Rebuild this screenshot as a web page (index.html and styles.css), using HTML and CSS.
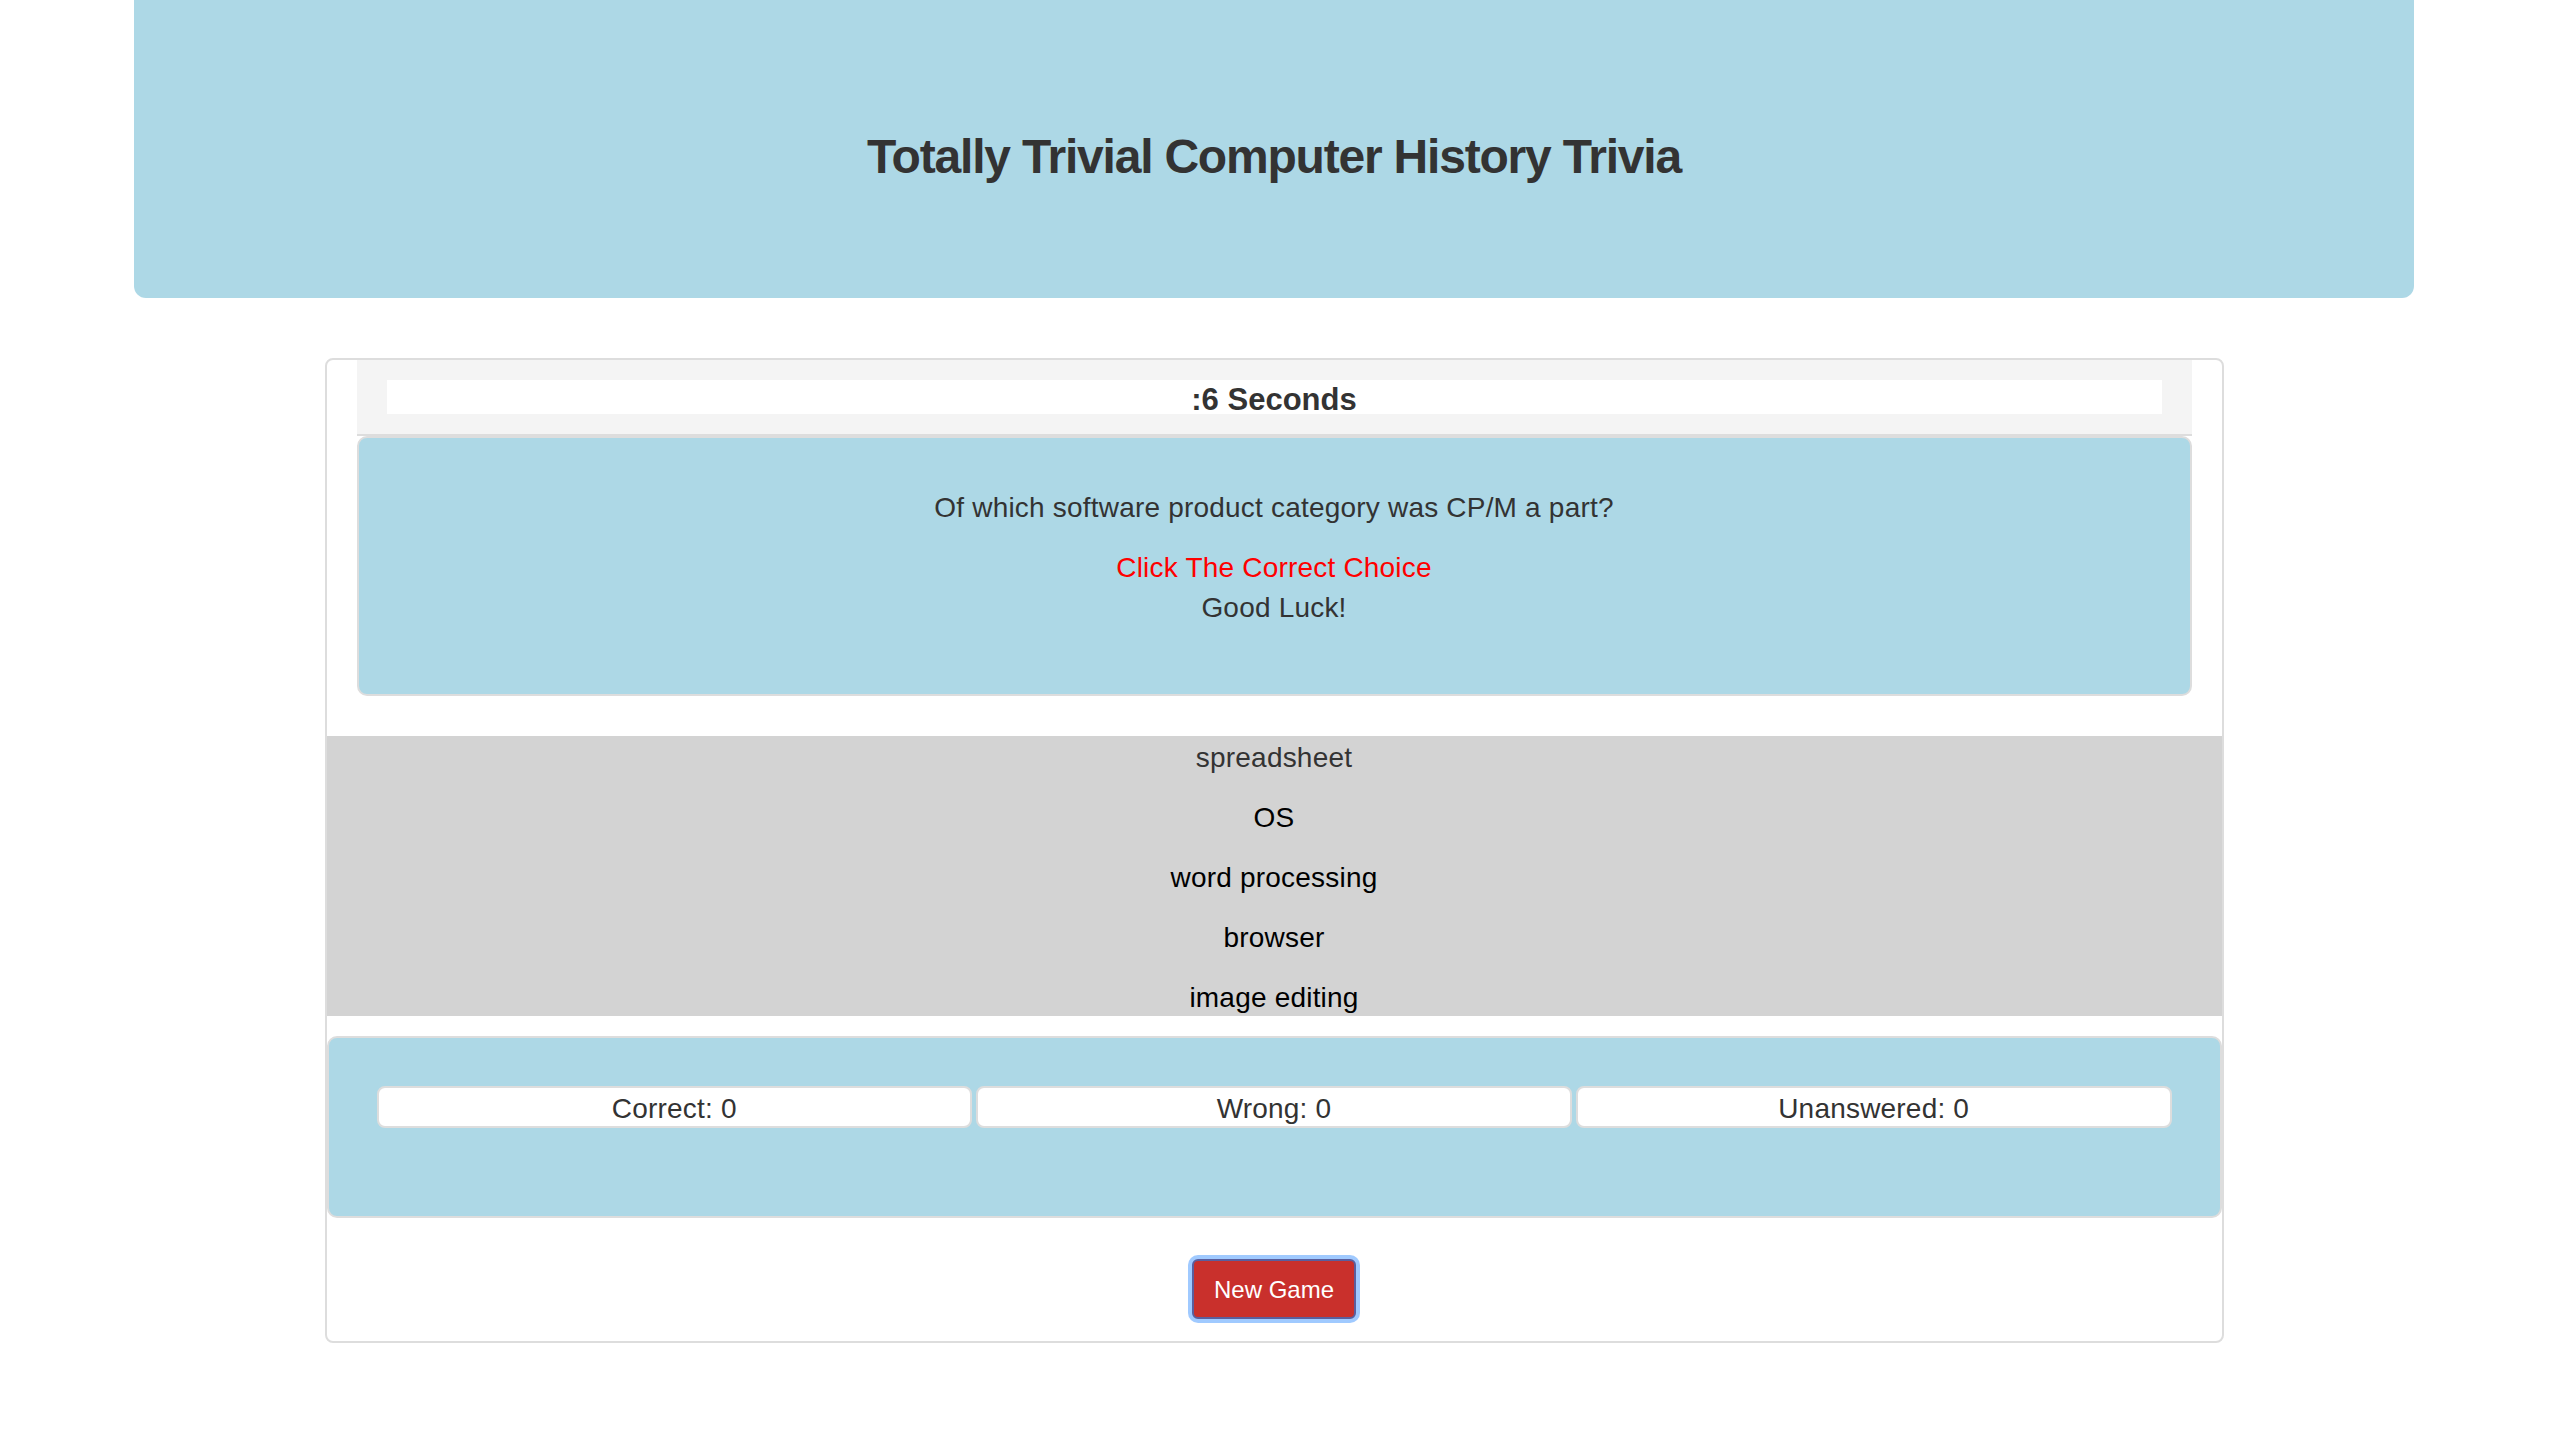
FILE: index.html
```html
<!DOCTYPE html>
<html lang="en">
<head>
<meta charset="utf-8">
<title>Totally Trivial Computer History Trivia</title>
<link rel="stylesheet" href="styles.css">
</head>
<body>
<div class="container">
  <header class="jumbotron">
    <h1 class="title">Totally Trivial Computer History Trivia</h1>
  </header>

  <main class="panel">
    <div class="timer-heading">
      <div class="timer-bar">:6 Seconds</div>
    </div>

    <section class="question-well">
      <p class="question">Of which software product category was CP/M a part?</p>
      <div class="instructions">
        <div class="instruct-red">Click The Correct Choice</div>
        <div class="instruct-luck">Good Luck!</div>
      </div>
    </section>

    <ul class="choices">
      <li class="choice choice-first">spreadsheet</li>
      <li class="choice">OS</li>
      <li class="choice">word processing</li>
      <li class="choice">browser</li>
      <li class="choice">image editing</li>
    </ul>

    <section class="score-well">
      <div class="score-row">
        <div class="score-box">Correct: 0</div>
        <div class="score-box">Wrong: 0</div>
        <div class="score-box">Unanswered: 0</div>
      </div>
    </section>

    <div class="actions">
      <button class="btn-new" type="button">New Game</button>
    </div>
  </main>
</div>
</body>
</html>
```

FILE: styles.css
```css
html, body {
  margin: 0;
  padding: 0;
  background: #ffffff;
}

body {
  padding-right: 6px;
  font-family: "Liberation Sans", Arial, Helvetica, sans-serif;
  font-size: 28px;
  line-height: 40px;
  letter-spacing: 0.2px;
  color: #333333;
}

.container {
  width: 2280px;
  margin: 0 auto;
}

.jumbotron {
  background: #add8e6;
  border-radius: 0 0 12px 12px;
  height: 298px;
  box-sizing: border-box;
  padding-top: 130px;
}

.title {
  margin: 0;
  text-align: center;
  font-size: 48px;
  line-height: 53px;
  font-weight: bold;
  letter-spacing: -1.2px;
  color: #333333;
}

.panel {
  width: 1899px;
  margin: 60px auto 0;
  border: 2px solid #dddddd;
  border-radius: 8px;
  box-sizing: border-box;
  padding-bottom: 22px;
}

.timer-heading {
  margin: 0 30px;
  background: #f4f4f4;
  padding: 20px 30px;
  border-bottom: 2px solid #dddddd;
}

.timer-bar {
  background: #ffffff;
  height: 34px;
  line-height: 39px;
  text-align: center;
  font-size: 31px;
  font-weight: bold;
  letter-spacing: 0;
  color: #333333;
}

.question-well {
  margin: 0 30px 40px;
  background: #add8e6;
  border: 2px solid #dddddd;
  border-radius: 10px;
  padding: 50px 38px 66px;
  text-align: center;
}

.question {
  margin: 0 0 20px;
}

.instruct-red {
  color: #ff0000;
}

.choices {
  list-style: none;
  margin: 0;
  padding: 0;
  background: #d3d3d3;
}

.choice {
  text-align: center;
  color: #000000;
  height: 40px;
  line-height: 43px;
  margin-bottom: 20px;
}

.choice:last-child {
  margin-bottom: 0;
}

.choice-first {
  color: #333333;
}

.score-well {
  margin: 20px 0 0;
  background: #add8e6;
  border: 2px solid #dddddd;
  border-radius: 10px;
  padding: 48px 48px 88px;
}

.score-row {
  display: flex;
  gap: 4px;
}

.score-box {
  flex: 1;
  background: #ffffff;
  border: 2px solid #dddddd;
  border-radius: 8px;
  height: 38px;
  line-height: 41px;
  text-align: center;
  color: #333333;
}

.actions {
  display: flex;
  justify-content: center;
  padding-top: 41px;
}

.btn-new {
  font-family: "Liberation Sans", Arial, Helvetica, sans-serif;
  font-size: 24px;
  line-height: 36px;
  padding: 11px 20px 9px;
  color: #ffffff;
  background: #c9302c;
  border: 2px solid #5a5f9e;
  border-radius: 6px;
  box-shadow: 0 0 0 4px rgba(128, 184, 255, 0.75);
  cursor: pointer;
}
```
